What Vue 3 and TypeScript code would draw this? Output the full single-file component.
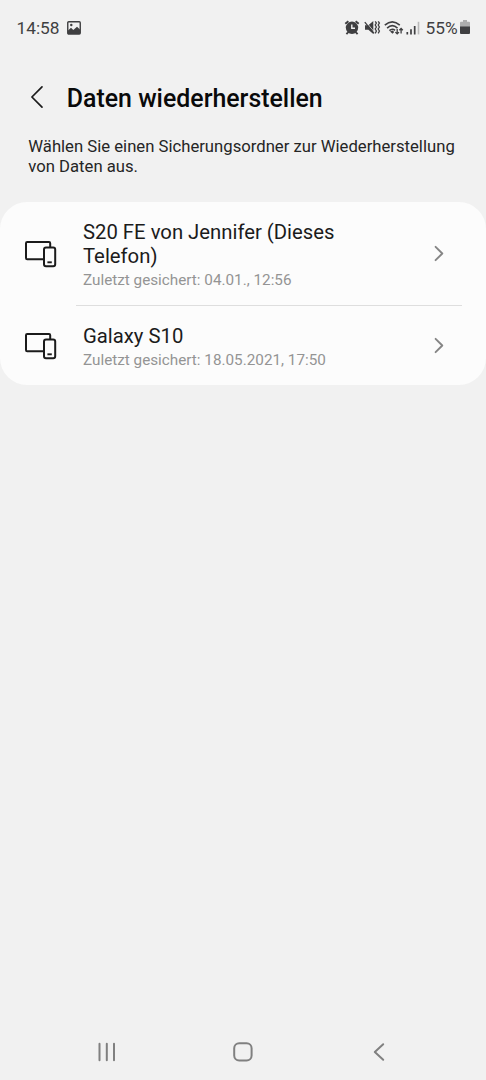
<script setup lang="ts">
interface Backup {
  name: string
  saved: string
}

const backups: Backup[] = [
  { name: 'S20 FE von Jennifer (Dieses Telefon)', saved: '04.01., 12:56' },
  { name: 'Galaxy S10', saved: '18.05.2021, 17:50' },
]
</script>

<template>
  <div class="screen">
    <header class="status">
      <span class="clock">14:58</span>
      <svg class="photo" width="14" height="14" viewBox="0 0 14 14">
        <rect x="0.75" y="0.75" width="12.5" height="12.2" rx="1" fill="none" stroke="#3f3f41" stroke-width="1.4" />
        <path d="M1 9.6 4 6.8 6.3 9 10 5.7 13 8.4V13H1Z" fill="#3f3f41" />
        <circle cx="4.3" cy="4" r="1.2" fill="#3f3f41" />
      </svg>
      <svg class="indicators" width="78" height="18" viewBox="0 0 78 18">
        <g fill="none" stroke="#3f3f41">
          <path d="M1.3 4.8 4.4 2.2M11.6 2.2l3.1 2.6" stroke-width="1.9" />
          <path d="M4 13.4 2.4 15.2M12 13.4l1.6 1.8" stroke-width="1.8" />
        </g>
        <circle cx="8" cy="8.8" r="6.2" fill="#3f3f41" />
        <path d="M7.8 5.4V9.2H11" fill="none" stroke="#f1f1f1" stroke-width="1.4" />
        <path d="M21 6.2h3.4l4.9-4.1V15l-4.9-4.2H21Z" fill="#3f3f41" />
        <path d="M21.8 2.6 31 14" stroke="#f1f1f1" stroke-width="0.8" />
        <path d="M20.8 3.2 30 14.4" stroke="#3f3f41" stroke-width="1.3" />
        <path d="M31.2 2.4 32.4 4l-1.2 2 1.2 2-1.2 2 1.2 2-1.2 2.4M34.2 2.4 35.4 4l-1.2 2 1.2 2-1.2 2 1.2 2-1.2 2.4" fill="none" stroke="#3f3f41" stroke-width="1.3" />
        <g fill="none" stroke="#3f3f41" stroke-width="1.6">
          <path d="M40.8 6.2Q48.3-.4 55.8 6.2" />
          <path d="M43.1 9.1Q48.3 4.3 53.5 9.1" />
          <path d="M45.4 11.7Q48.3 8.9 51 11.4" />
        </g>
        <path d="m46 12.4 2.5 2.4 1.7-1.8-1.6-1.5Z" fill="#3f3f41" />
        <g fill="none" stroke="#3f3f41" stroke-width="1.3">
          <path d="M53.2 10v5M51.4 13.1l1.8 1.8 1.8-1.8" />
          <path d="M57.1 14.5V9.4M55.4 11.2l1.7-1.8 1.7 1.8" />
        </g>
        <path d="M63.3 13V15.4M67 10.2V15.4M70.7 7V15.4" stroke="#3f3f41" stroke-width="1.7" />
        <path d="M74.5 2.8V15.4" stroke="#b9b9b9" stroke-width="1.6" />
      </svg>
      <span class="percent">55%</span>
      <svg class="battery" width="10" height="16" viewBox="0 0 10 16">
        <path d="M3 0h4v1.8h2a1 1 0 0 1 1 1V7H0V2.8a1 1 0 0 1 1-1h2Z" fill="#adadad" />
        <path d="M0 6.5h10V13a1 1 0 0 1-1 1H1a1 1 0 0 1-1-1Z" fill="#3f3f41" />
      </svg>
    </header>

    <div class="title-bar">
      <svg class="back" width="14" height="24" viewBox="0 0 14 24">
        <path d="M12 1.8 1.9 12 12 22.2" fill="none" stroke="#1c1c1c" stroke-width="1.7" stroke-linecap="round" stroke-linejoin="round" />
      </svg>
      <h1>Daten wiederherstellen</h1>
    </div>

    <p class="intro">Wählen Sie einen Sicherungsordner zur Wiederherstellung von Daten aus.</p>

    <ul class="card">
      <li v-for="backup in backups" :key="backup.name" class="row">
        <svg class="devices" width="32" height="28" viewBox="0 0 32 28">
          <g fill="none" stroke="#1b1b1b" stroke-width="2" stroke-linejoin="round">
            <path d="M18.5 19.3H2.2A1.2 1.2 0 0 1 1 18.1V3.2A1.2 1.2 0 0 1 2.2 2H24a1.2 1.2 0 0 1 1.2 1.2V7.2" />
            <rect x="19" y="7.6" width="11.2" height="18.7" rx="2" />
          </g>
          <path d="M22.4 22.3h4.4" stroke="#1b1b1b" stroke-width="1.9" />
        </svg>
        <div class="texts">
          <div class="name">{{ backup.name }}</div>
          <div class="saved">Zuletzt gesichert: {{ backup.saved }}</div>
        </div>
        <svg class="chevron" width="10" height="17" viewBox="0 0 10 17">
          <path d="M1.6 1.8 8.3 8.5 1.6 15.2" fill="none" stroke="#858585" stroke-width="1.9" stroke-linecap="round" stroke-linejoin="round" />
        </svg>
      </li>
    </ul>

    <nav class="nav">
      <svg width="18" height="20" viewBox="0 0 18 20">
        <path d="M1.5 1.8v16.4M8.8 1.8v16.4M16 1.8v16.4" stroke="#808080" stroke-width="2" stroke-linecap="round" />
      </svg>
      <svg class="home" width="20" height="20" viewBox="0 0 20 20">
        <rect x="1.2" y="1.2" width="17.4" height="17.4" rx="5" fill="none" stroke="#808080" stroke-width="2" />
      </svg>
      <svg width="12" height="20" viewBox="0 0 12 20">
        <path d="M10.2 2.2 1.8 10l8.4 7.8" fill="none" stroke="#808080" stroke-width="2" stroke-linecap="round" stroke-linejoin="round" />
      </svg>
    </nav>
  </div>
</template>

<style>
body {
  margin: 0;
  background: #f1f1f1;
}
</style>

<style scoped>
.screen {
  display: flex;
  flex-direction: column;
  width: 486px;
  height: 1080px;
  overflow: hidden;
  background: #f1f1f1;
  font-family: Roboto, "Liberation Sans", sans-serif;
}

.status {
  display: flex;
  align-items: center;
  height: 56px;
  padding: 0 16px 0 16.5px;
  color: #3f3f41;
  font-size: 17.3px;
  line-height: 20px;
}

.photo {
  margin-left: 7px;
}

.indicators {
  margin-left: auto;
}

.percent {
  margin-left: 3.4px;
}

.battery {
  margin-left: 2.4px;
}

.title-bar {
  display: flex;
  align-items: center;
  height: 82px;
  padding-left: 30px;
}

h1 {
  margin: 3px 0 0 22.8px;
  color: #0a0a0a;
  font-size: 24.9px;
  font-weight: 500;
  line-height: 30px;
}

.intro {
  margin: -1px 24px 26px 28.3px;
  color: #252525;
  font-size: 16.68px;
  line-height: 19.5px;
}

.card {
  margin: 0;
  padding: 0;
  list-style: none;
  border-radius: 27px;
  background: #fcfcfc;
}

.row {
  display: flex;
  position: relative;
  align-items: center;
  padding: 15px 42px 15px 25px;
}

.row + .row {
  padding-top: 16px;
}

.row + .row::before {
  content: "";
  position: absolute;
  top: 0;
  left: 76px;
  right: 24px;
  height: 1px;
  background: #dedede;
}

.texts {
  width: 290px;
  margin-left: 26px;
  padding: 3px 0 1px;
}

.name {
  color: #1b1b1b;
  font-size: 20.3px;
  line-height: 24px;
}

.saved {
  margin-top: 2.5px;
  color: #949494;
  font-size: 15.28px;
  line-height: 18.5px;
}

.chevron {
  margin-left: auto;
}

.nav {
  display: flex;
  justify-content: space-between;
  align-items: center;
  height: 56px;
  margin-top: auto;
  padding: 0 101px 0 97.5px;
}

.home {
  margin-right: 3px;
}
</style>
